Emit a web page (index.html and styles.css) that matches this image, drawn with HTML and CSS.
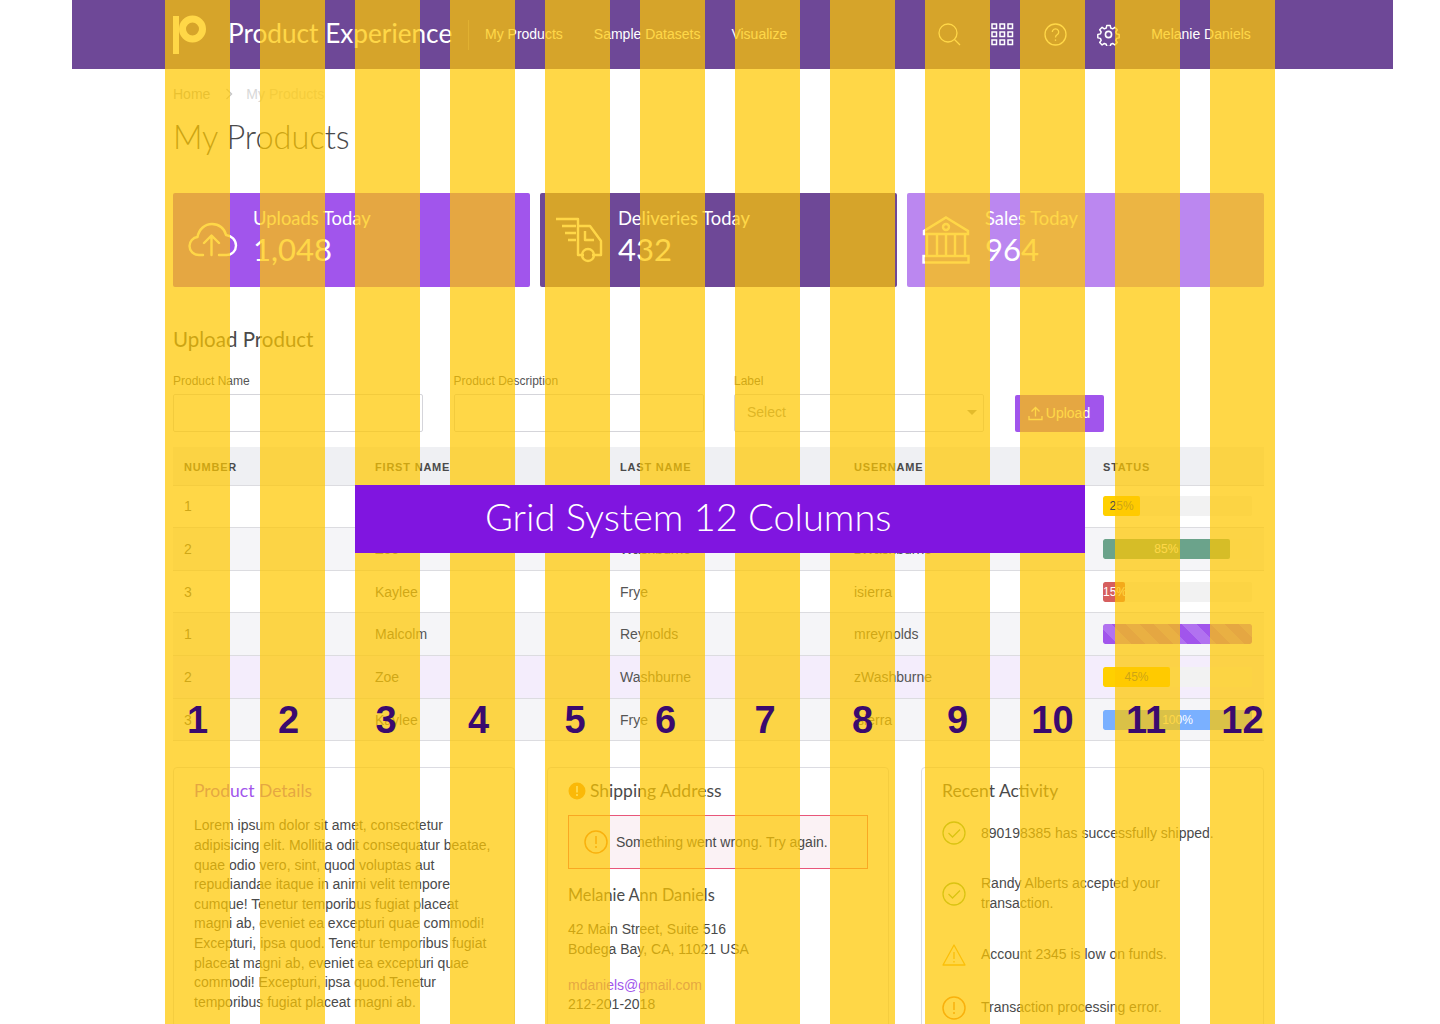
FILE: index.html
```html
<!DOCTYPE html>
<html>
<head>
  <title>Product Experience - Grid System</title>
  <link rel="stylesheet" href="styles.css">
</head>
<body>
<div class="page">

  <div class="topbar">
    <svg class="logo" width="36" height="40" viewBox="0 0 36 40">
      <rect x="1" y="1" width="6" height="38" fill="#fff"/>
      <circle cx="20.5" cy="14" r="10" fill="none" stroke="#fff" stroke-width="7"/>
    </svg>
    <div class="brand">Product Experience</div>
    <div class="topbar-sep"></div>
    <a class="nav-link nav-first">My Products</a>
    <a class="nav-link">Sample Datasets</a>
    <a class="nav-link">Visualize</a>
    <div class="top-icons">
      <svg width="23" height="23" viewBox="0 0 23 23" fill="none" stroke="#fff" stroke-width="1.3">
        <circle cx="10" cy="10" r="9"/><path d="M16.5 16.5l5.5 5.5"/>
      </svg>
      <svg width="23" height="23" viewBox="0 0 23 23" fill="none" stroke="#fff" stroke-width="1.5">
        <rect x="1" y="1" width="4.5" height="4.5"/><rect x="9" y="1" width="4.5" height="4.5"/><rect x="17" y="1" width="4.5" height="4.5"/>
        <rect x="1" y="9" width="4.5" height="4.5"/><rect x="9" y="9" width="4.5" height="4.5"/><rect x="17" y="9" width="4.5" height="4.5"/>
        <rect x="1" y="17" width="4.5" height="4.5"/><rect x="9" y="17" width="4.5" height="4.5"/><rect x="17" y="17" width="4.5" height="4.5"/>
      </svg>
      <svg width="23" height="23" viewBox="0 0 23 23" fill="none" stroke="#fff" stroke-width="1.3">
        <circle cx="11.5" cy="11.5" r="10.5"/><path d="M8.3 9a3.2 3.2 0 1 1 4.8 2.8c-1 .6-1.6 1.2-1.6 2.6"/><path d="M11.5 16.4v1.5"/>
      </svg>
      <svg width="23" height="23" viewBox="0 0 24 24" fill="none" stroke="#fff" stroke-width="1.7" stroke-linejoin="round">
        <circle cx="12" cy="12" r="3.2"/>
        <path d="M10 1.500h4l.6 3 2.200.9 2.600-1.700 2.800 2.800-1.700 2.600.9 2.200 3 .6v4l-3 .6-.9 2.200 1.700 2.600-2.800 2.800-2.600-1.700-2.200.9-.6 2.600h-4l-.6-2.600-2.200-.9-2.600 1.700-2.800-2.800 1.700-2.600-.9-2.200-3-.6v-4l3-.6.9-2.200-1.700-2.600 2.800-2.800 2.600 1.700 2.200-.9z" transform="translate(1.200 1.200) scale(.9)"/>
      </svg>
    </div>
    <div class="user-name">Melanie Daniels</div>
  </div>

  <div class="content">
    <div class="crumbs">
      <span>Home</span>
      <svg class="crumb-arrow" width="8" height="12" viewBox="0 0 8 12" fill="none" stroke="#c4c4c4" stroke-width="1.4"><path d="M1.5 1l5 5-5 5"/></svg>
      <span class="crumb-now">My Products</span>
    </div>
    <h1 class="page-title">My Products</h1>

    <div class="stats">
      <div class="stat stat-a">
        <svg width="50" height="36" viewBox="0 0 50 36" fill="none" stroke="#fff" stroke-width="2.4" stroke-linecap="round" stroke-linejoin="round">
          <path d="M15 33H11C5.500 33 1.500 29 1.500 24c0-4.500 3.500-8.500 8-9C11 7 17 2 24 2c7 0 12.500 4.500 14 11 5.500 .5 10 5 10 10.500 0 5.300-4 9.500-9.500 9.500H31"/>
          <path d="M23.500 33V14M16 21l7.500-7.500L31 21"/>
        </svg>
        <div class="stat-text">
          <div class="stat-label">Uploads Today</div>
          <div class="stat-num">1,048</div>
        </div>
      </div>
      <div class="stat stat-b">
        <svg width="48" height="46" viewBox="0 0 48 46" fill="none" stroke="#fff" stroke-width="2.4" stroke-linejoin="round">
          <path d="M1 2h22v28M7 9h14M10 16h11M13 23h8"/>
          <path d="M23 9h12l11 15v14h-9M23 30v8h6"/>
          <path d="M30 14v9h9"/>
          <circle cx="33" cy="38" r="6"/>
        </svg>
        <div class="stat-text">
          <div class="stat-label">Deliveries Today</div>
          <div class="stat-num">432</div>
        </div>
      </div>
      <div class="stat stat-c">
        <svg width="48" height="48" viewBox="0 0 48 48" fill="none" stroke="#fff" stroke-width="2.4">
          <path d="M24 1.500L46 15v3H2v-3z"/>
          <circle cx="24" cy="11" r="3"/>
          <path d="M5 18v22M15 18v22M24 18v22M33 18v22M43 18v22"/>
          <rect x="1.500" y="40" width="45" height="6.500"/>
        </svg>
        <div class="stat-text">
          <div class="stat-label">Sales Today</div>
          <div class="stat-num">964</div>
        </div>
      </div>
    </div>

    <h2 class="section-title">Upload Product</h2>

    <div class="upload-form">
      <div class="field">
        <label>Product Name</label>
        <div class="input"></div>
      </div>
      <div class="field">
        <label>Product Description</label>
        <div class="input"></div>
      </div>
      <div class="field">
        <label>Label</label>
        <div class="input select">Select<span class="caret"></span></div>
      </div>
      <button class="upload-btn">
        <svg width="15" height="15" viewBox="0 0 15 15" fill="none" stroke="#fff" stroke-width="1.3"><path d="M7.500 10.500V1.500M3.500 5.500l4-4 4 4M1 10v3.500h13V10"/></svg>
        Upload
      </button>
    </div>

    <table class="users">
      <colgroup>
        <col class="c1"><col class="c2"><col class="c3"><col class="c4"><col class="c5">
      </colgroup>
      <thead>
        <tr><th>Number</th><th>First Name</th><th>Last Name</th><th>Username</th><th>Status</th></tr>
      </thead>
      <tbody>
        <tr>
          <td>1</td><td>Malcolm</td><td>Reynolds</td><td>mreynolds</td>
          <td><div class="bar"><div class="fill yellow dark" style="width:25%">25%</div></div></td>
        </tr>
        <tr class="alt">
          <td>2</td><td>Zoe</td><td>Washburne</td><td>zWashburne</td>
          <td><div class="bar"><div class="fill green" style="width:85%">85%</div></div></td>
        </tr>
        <tr>
          <td>3</td><td>Kaylee</td><td>Frye</td><td>isierra</td>
          <td><div class="bar"><div class="fill red" style="width:15%">15%</div></div></td>
        </tr>
        <tr class="alt">
          <td>1</td><td>Malcolm</td><td>Reynolds</td><td>mreynolds</td>
          <td><div class="bar"><div class="fill stripes" style="width:100%"></div></div></td>
        </tr>
        <tr class="hover">
          <td>2</td><td>Zoe</td><td>Washburne</td><td>zWashburne</td>
          <td><div class="bar"><div class="fill yellow dark" style="width:45%">45%</div></div></td>
        </tr>
        <tr class="alt">
          <td>3</td><td>Kaylee</td><td>Frye</td><td>isierra</td>
          <td><div class="bar"><div class="fill blue" style="width:100%">100%</div></div></td>
        </tr>
      </tbody>
    </table>

    <div class="panels">
      <div class="panel">
        <h3 class="panel-title purple">Product Details</h3>
        <p class="panel-text">Lorem ipsum dolor sit amet, consectetur adipisicing elit. Mollitia odit consequatur beatae, quae odio vero, sint, quod voluptas aut repudiandae itaque in animi velit tempore cumque! Tenetur temporibus fugiat placeat magni ab, eveniet ea excepturi quae commodi! Excepturi, ipsa quod. Tenetur temporibus fugiat placeat magni ab, eveniet ea excepturi quae commodi! Excepturi, ipsa quod.Tenetur temporibus fugiat placeat magni ab.</p>
      </div>

      <div class="panel">
        <h3 class="panel-title">
          <svg width="18" height="18" viewBox="0 0 18 18"><circle cx="9" cy="9" r="8.500" fill="#f0941e"/><rect x="8" y="4" width="2" height="6.500" fill="#fff"/><rect x="8" y="12" width="2" height="2" fill="#fff"/></svg>
          Shipping Address
        </h3>
        <div class="alert">
          <svg width="24" height="24" viewBox="0 0 24 24" fill="none" stroke="#e8762e" stroke-width="1.500"><circle cx="12" cy="12" r="11"/><path d="M12 6v8M12 16v2"/></svg>
          Something went wrong. Try again.
        </div>
        <div class="ship-name">Melanie Ann Daniels</div>
        <p class="ship-line">42 Main Street, Suite 516<br>Bodega Bay, CA, 11021 USA</p>
        <p class="ship-line ship-contact"><a class="mail">mdaniels@gmail.com</a><br>212-201-2018</p>
      </div>

      <div class="panel">
        <h3 class="panel-title">Recent Activity</h3>
        <div class="activity">
          <svg width="24" height="24" viewBox="0 0 24 24" fill="none" stroke="#7cb83e" stroke-width="1.300"><circle cx="12" cy="12" r="11"/><path d="M6.500 12l4 4 7.500-7.500"/></svg>
          <span>890198385 has successfully shipped.</span>
        </div>
        <div class="activity">
          <svg width="24" height="24" viewBox="0 0 24 24" fill="none" stroke="#7cb83e" stroke-width="1.300"><circle cx="12" cy="12" r="11"/><path d="M6.500 12l4 4 7.500-7.500"/></svg>
          <span>Randy Alberts accepted your transaction.</span>
        </div>
        <div class="activity">
          <svg width="24" height="24" viewBox="0 0 24 24" fill="none" stroke="#f0a81e" stroke-width="1.300" stroke-linejoin="round"><path d="M12 2l11 20H1z"/><path d="M12 9v7M12 18v1.500"/></svg>
          <span>Account 2345 is low on funds.</span>
        </div>
        <div class="activity">
          <svg width="24" height="24" viewBox="0 0 24 24" fill="none" stroke="#e8762e" stroke-width="1.500"><circle cx="12" cy="12" r="11"/><path d="M12 6v8M12 16v2"/></svg>
          <span>Transaction processing error.</span>
        </div>
      </div>
    </div>
  </div>
</div>

<!-- grid overlay -->
<div class="grid-overlay">
  <div class="col"><span class="num">1</span></div>
  <div class="col"><span class="num">2</span></div>
  <div class="col"><span class="num">3</span></div>
  <div class="col"><span class="num">4</span></div>
  <div class="col"><span class="num">5</span></div>
  <div class="col"><span class="num">6</span></div>
  <div class="col"><span class="num">7</span></div>
  <div class="col"><span class="num">8</span></div>
  <div class="col"><span class="num">9</span></div>
  <div class="col"><span class="num">10</span></div>
  <div class="col"><span class="num">11</span></div>
  <div class="col"><span class="num">12</span></div>
</div>
<div class="grid-banner">Grid System 12 Columns</div>
</body>
</html>
```

FILE: styles.css
```css
html, body { margin:0; padding:0; height:1024px; overflow:hidden; background:#fff; }
body { position:relative; font-family:"Liberation Sans", Arial, sans-serif; font-size:14px; color:#4a4a4a; }
h1, h2, h3, p { margin:0; font-weight:normal; }

.page { margin-left:72px; width:1321px; }

/* top bar */
.topbar { display:flex; align-items:center; height:69px; padding-left:101px; background:#6e4897; color:#fff; box-sizing:border-box; }
.logo { margin-left:-1px; }
.brand { font-family:Lato, sans-serif; font-size:26.2px; margin-left:20px; padding-bottom:4px; white-space:nowrap; width:224px; }
.topbar-sep { width:1px; height:30px; margin-left:16px; background:rgba(255,255,255,.25); }
.nav-link { font-size:14px; margin-left:31px; padding-bottom:2px; }
.nav-first { margin-left:16px; }
.top-icons { display:flex; gap:30px; margin-left:151px; }
.user-name { margin-left:31px; font-size:14px; padding-bottom:2px; }

/* main column */
.content { width:1091px; margin-left:101px; }

.crumbs { display:flex; align-items:center; gap:15px; height:16px; margin-top:17px; color:#b0b0b0; font-size:14px; }
.crumb-arrow { margin-right:-2px; }
.crumb-now { color:#d8d8d8; }
.page-title { font-family:Lato, sans-serif; font-weight:300; font-size:32.5px; line-height:40px; margin-top:15px; color:#4a4a4a; }

.stats { display:grid; grid-template-columns:repeat(3, 1fr); gap:10px; margin-top:36px; }
.stat { display:flex; align-items:center; gap:15px; height:94px; padding-left:15px; border-radius:2px; color:#fff; box-sizing:border-box; }
.stat-a { background:#a155ec; }
.stat-b { background:#6e4897; }
.stat-c { background:#bb87f0; }
.stat-text { padding-bottom:6px; }
.stat-label { font-family:Lato, sans-serif; font-size:18.4px; line-height:22px; }
.stat-num { font-family:Lato, sans-serif; font-size:31px; line-height:38px; margin-top:1px; }

.section-title { font-family:Lato, sans-serif; font-size:20.5px; line-height:24px; margin-top:40px; color:#4a4a4a; }

.upload-form { display:flex; align-items:flex-end; gap:30.5px; margin-top:23px; }
.field { width:250px; }
.field label { display:block; font-size:12px; line-height:14px; margin-bottom:6px; color:#555; }
.input { height:38px; border:1px solid #d5d5da; border-radius:2px; box-sizing:border-box; }
.select { display:flex; align-items:center; justify-content:space-between; padding:0 6px 2px 12px; color:#888; }
.caret { width:0; height:0; border-left:5px solid transparent; border-right:5px solid transparent; border-top:5px solid #999; }
.upload-btn { display:flex; align-items:center; justify-content:center; gap:3px; width:89px; height:37px; padding:0 0 1px; border:0; border-radius:2px; background:#a155ec; color:#fff; font-family:inherit; font-size:14px; }

.users { width:1091px; table-layout:fixed; border-collapse:collapse; margin-top:15px; }
.c1 { width:191px; } .c2 { width:245px; } .c3 { width:234px; } .c4 { width:249px; } .c5 { width:172px; }
.users th { height:38px; padding:2px 0 0 11px; background:#eff0f3; border-bottom:1px solid #dcdce0; box-sizing:border-box; text-align:left; text-transform:uppercase; font-size:11px; letter-spacing:.8px; color:#4a4a4a; }
.users td { height:42.67px; padding:0 12px 0 11px; border-bottom:1px solid #dcdce0; box-sizing:border-box; font-size:14px; color:#555; }
.alt td { background:#f5f5f8; }
.hover td { background:#f4edfc; }

.bar { height:20px; background:#f2f2f2; border-radius:2px; overflow:hidden; }
.fill { height:100%; line-height:20px; text-align:center; font-size:12px; color:#fff; border-radius:2px; white-space:nowrap; }
.yellow { background:#ffd000; }
.dark { color:#4a4a4a; }
.green { background:#6ba38b; }
.red { background:#d65f5f; }
.blue { background:#7ab0ff; }
.stripes { background:repeating-linear-gradient(45deg, #a155ec 0 10px, #b172f0 10px 20px); }

.panels { display:grid; grid-template-columns:342px 342px 343px; gap:32px; margin-top:26px; }
.panel { height:300px; padding:11px 20px 0; border:1px solid #dcdce2; border-radius:4px; box-sizing:border-box; }
.panel-title { display:flex; align-items:center; gap:4px; font-family:Lato, sans-serif; font-size:17.5px; line-height:24px; color:#4a4a4a; }
.purple { color:#a155ec; }
.panel-text { margin-top:13px; line-height:19.6px; }

.alert { display:flex; align-items:center; gap:8px; height:54px; margin-top:12px; padding-left:15px; background:#fbf2f5; border:1px solid #e8567a; box-sizing:border-box; }
.ship-name { font-family:Lato, sans-serif; font-size:16.3px; line-height:20px; margin-top:16px; }
.ship-line { margin-top:15px; line-height:19.6px; }
.ship-contact { margin-top:16px; }
.mail { color:#a155ec; }

.activity { display:flex; align-items:center; gap:15px; margin-top:18px; padding-right:27px; }
.activity svg { flex:none; }
.activity span { line-height:19.6px; }
.activity + .activity { margin-top:29px; }

/* 12 column overlay sits on top of everything */
.grid-overlay { position:absolute; top:0; left:165px; height:1024px; display:grid; grid-template-columns:repeat(12, 65px); gap:30px; }
.col { background:rgba(255,199,0,.72); text-align:center; padding-top:697px; box-sizing:border-box; }
.num { font-size:38px; line-height:46px; font-weight:bold; color:#3a0a6e; }
.col:nth-child(2) .num, .col:nth-child(4) .num { margin-left:-8px; }
.col:nth-child(3) .num, .col:nth-child(11) .num { margin-left:-3px; }
.col:nth-child(5) .num, .col:nth-child(7) .num { margin-left:-5px; }
.col:nth-child(6) .num { margin-left:-14px; }
.grid-banner { position:absolute; top:485px; left:355px; width:730px; height:68px; padding-left:130px; box-sizing:border-box; background:#8015e0; color:#fff; font-family:Lato, sans-serif; font-weight:300; font-size:38px; line-height:62px; }
```
